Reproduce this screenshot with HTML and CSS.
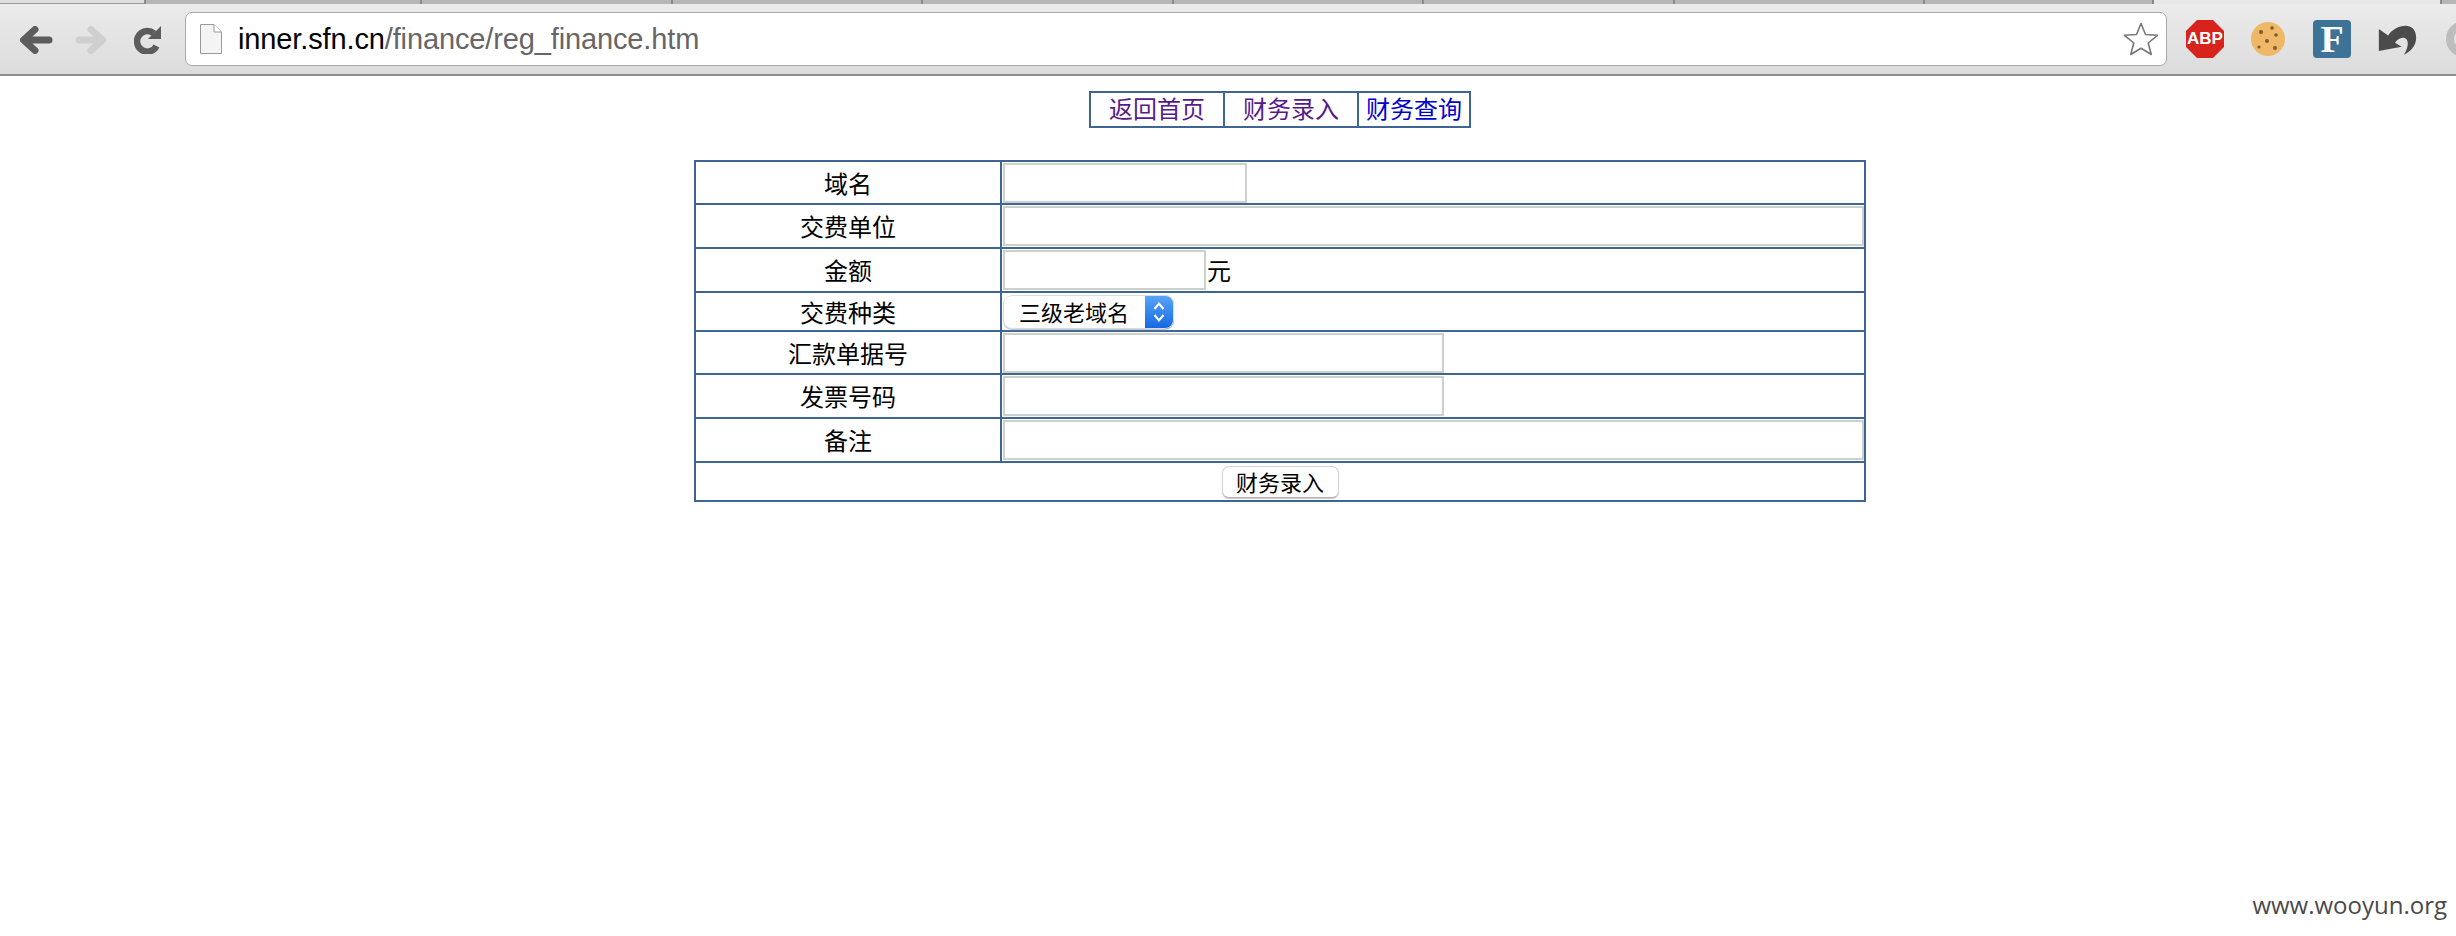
FILE: index.html
```html
<!DOCTYPE html>
<html lang="zh-CN">
<head>
<meta charset="utf-8">
<title>财务录入</title>
<link rel="stylesheet" href="styles.css">
</head>
<body>
<div class="chrome">
  <div class="tabstrip">
    <span class="tab tab-first"></span>
    <span class="tab tab-w1"></span>
    <span class="tab"></span>
    <span class="tab"></span>
    <span class="tab"></span>
    <span class="tab"></span>
    <span class="tab"></span>
    <span class="tab"></span>
    <span class="tab tab-w2"></span>
    <span class="tab-gap"></span>
    <span class="tab tab-last"></span>
  </div>
  <div class="toolbar">
    <svg class="ic-back" viewBox="19 26 34 28" aria-hidden="true"><path d="M24 40H49M35 29.500L23.500 40L35 50.500" fill="none" stroke="#5c5c5c" stroke-width="7" stroke-linecap="round" stroke-linejoin="round"/></svg>
    <svg class="ic-fwd" viewBox="75 26 34 28" aria-hidden="true"><path d="M79 40H102M91 29.500L102.500 40L91 50.500" fill="none" stroke="#cfcfcf" stroke-width="7" stroke-linecap="round" stroke-linejoin="round"/></svg>
    <svg class="ic-reload" viewBox="134 26 28 28" aria-hidden="true"><path d="M154 33.500A10.300 10.300 0 1 0 156.500 46" fill="none" stroke="#5c5c5c" stroke-width="6.500"/><path d="M161 26V39H148Z" fill="#5c5c5c"/></svg>
    <div class="omnibox">
      <svg class="ic-doc" viewBox="0 0 22 30" aria-hidden="true"><path d="M.5.500H14L21.500 8V29.500H.5Z" fill="#f4f4f4" stroke="#9a9a9a"/><path d="M14 .5V8H21.500" fill="#fff" stroke="#9a9a9a"/></svg>
      <div class="url"><span class="url-host">inner.sfn.cn</span>/finance/reg_finance.htm</div>
      <svg class="ic-star" viewBox="0 0 36 34" aria-hidden="true"><path d="M18 1.500L22.500 12.500L34.500 13.300L25.200 21L28.300 32.500L18 26.200L7.700 32.500L10.800 21L1.500 13.300L13.500 12.500Z" fill="#fff" stroke="#777" stroke-width="1.600" stroke-linejoin="round"/></svg>
    </div>
    <div class="ext ext-abp"><span>ABP</span></div>
    <svg class="ext ext-cookie" viewBox="0 0 36 36" aria-hidden="true">
      <circle cx="18" cy="18" r="17" fill="#efb866"/>
      <g fill="#7c5a35"><circle cx="11" cy="11" r="2"/><circle cx="22" cy="7" r="1.800"/><circle cx="26" cy="14" r="1.800"/><circle cx="17" cy="20" r="2"/><circle cx="9" cy="26" r="1.600"/><circle cx="25" cy="27" r="2"/></g>
    </svg>
    <div class="ext ext-f"><span>F</span></div>
    <svg class="ext ext-undo" viewBox="265 40 117 97" aria-hidden="true"><path d="M267 58L295 78C315 45 380 30 380 85C380 110 362 128 343 136C360 110 358 85 340 85C330 85 322 92 316 100L336 112L267 125Z" fill="#4b4b4b"/></svg>
    <div class="ext ext-ring"></div>
  </div>
</div>

<div class="page">
  <table class="nav">
    <tr>
      <td class="nav-a"><a class="visited" href="#">返回首页</a></td>
      <td class="nav-b"><a class="visited" href="#">财务录入</a></td>
      <td class="nav-c"><a class="fresh" href="#">财务查询</a></td>
    </tr>
  </table>

  <form class="form">
    <table class="grid">
      <tr class="tight">
        <td class="label">域名</td>
        <td class="value"><input class="in in-domain" type="text"></td>
      </tr>
      <tr>
        <td class="label">交费单位</td>
        <td class="value"><input class="in in-full" type="text"></td>
      </tr>
      <tr>
        <td class="label">金额</td>
        <td class="value"><div class="amount"><input class="in in-amount" type="text"><span class="unit">元</span></div></td>
      </tr>
      <tr class="short">
        <td class="label">交费种类</td>
        <td class="value">
          <div class="select-wrap">
            <select class="select"><option>三级老域名</option></select>
            <svg class="select-arrows" viewBox="0 0 14 24" aria-hidden="true"><path d="M2.500 9L7 3.500L11.500 9M2.500 15L7 20.500L11.500 15" fill="none" stroke="#fff" stroke-width="2"/></svg>
          </div>
        </td>
      </tr>
      <tr class="tight">
        <td class="label">汇款单据号</td>
        <td class="value"><input class="in in-mid" type="text"></td>
      </tr>
      <tr>
        <td class="label">发票号码</td>
        <td class="value"><input class="in in-mid" type="text"></td>
      </tr>
      <tr>
        <td class="label">备注</td>
        <td class="value"><input class="in in-full" type="text"></td>
      </tr>
      <tr class="short">
        <td class="submit-cell" colspan="2"><button class="submit" type="button">财务录入</button></td>
      </tr>
    </table>
  </form>
</div>

<div class="mark">www.wooyun.org</div>
</body>
</html>
```

FILE: styles.css
```css
html, body {
  margin: 0;
  padding: 0;
  height: 936px;
  overflow: hidden;
  background: #fff;
}
body {
  position: relative;
  font-family: "Noto Sans CJK SC", "Liberation Sans", sans-serif;
  font-size: 24px;
  color: #000;
}

/* browser chrome */
.chrome {
  width: 2456px;
  overflow: hidden;
  background: linear-gradient(#ececec, #dcdcdc);
  border-bottom: 2px solid #8e8e8e;
}
.tabstrip {
  display: flex;
  height: 4px;
  background: #e8e8e8;
}
.tab {
  flex: none;
  width: 250.500px;
  box-sizing: border-box;
  background: #b6b6b6;
  border-left: 2px solid #8a8a8a;
}
.tab-first {
  width: 144px;
  background: #dedede;
  border-left: 0;
  border-bottom: 1px solid #999;
}
.tab-w1 { width: 276px; }
.tab-w2 { width: 231px; border-right: 2px solid #8a8a8a; }
.tab-gap { flex: none; width: 286px; }
.tab-last { width: 20px; }
.toolbar {
  display: flex;
  align-items: center;
  height: 70px;
  box-sizing: border-box;
  padding: 0 0 0 19px;
}
.toolbar svg { flex: none; display: block; }
.ic-back { width: 34px; height: 28px; margin-top: 1px; }
.ic-fwd { width: 34px; height: 28px; margin: 1px 0 0 22px; }
.ic-reload { width: 28px; height: 28px; margin: 1px 0 0 25px; }
.omnibox {
  flex: none;
  display: flex;
  align-items: center;
  width: 1982px;
  height: 54px;
  box-sizing: border-box;
  margin-left: 23px;
  padding: 0 7px 0 14px;
  background: #fff;
  border: 1px solid #a9a9a9;
  border-radius: 7px;
}
.ic-doc { width: 22px; height: 30px; }
.url {
  flex: 1;
  margin-left: 16px;
  font-family: "Liberation Sans", Arial, sans-serif;
  font-size: 29px;
  letter-spacing: -0.13px;
  color: #666;
  white-space: nowrap;
}
.url-host { color: #000; }
.ic-star { width: 36px; height: 34px; }
.ext { flex: none; }
.ext-abp {
  display: flex;
  align-items: center;
  justify-content: center;
  width: 38px;
  height: 38px;
  margin-left: 19px;
  background: #d6231c;
  clip-path: polygon(29% 0, 71% 0, 100% 29%, 100% 71%, 71% 100%, 29% 100%, 0 71%, 0 29%);
  font-family: "Liberation Sans", Arial, sans-serif;
  font-size: 17px;
  font-weight: 700;
  color: #fff;
}
.ext-cookie { width: 36px; height: 36px; margin-left: 26px; }
.ext-f {
  display: flex;
  align-items: center;
  justify-content: center;
  width: 38px;
  height: 38px;
  margin-left: 27px;
  background: #3d7397;
  border-radius: 4px;
  font-family: "Liberation Serif", serif;
  font-size: 38px;
  font-weight: 700;
  line-height: 1;
  color: #fff;
}
.ext-undo { width: 39px; height: 32px; margin-left: 27px; }
.ext-ring {
  width: 36px;
  height: 36px;
  margin-left: 29px;
  box-sizing: border-box;
  border: 8px solid #bdbdbd;
  border-radius: 50%;
}

/* page: the layout viewport is wider than the crop */
.page {
  width: 2560px;
  padding-top: 15px;
}
table {
  border-collapse: collapse;
  margin: 0 auto;
}
td {
  box-sizing: border-box;
  padding: 0;
  border: 2px solid #3f6592;
  text-align: center;
}
.nav {
  table-layout: fixed;
  width: 380px;
  height: 37px;
}
.nav td { line-height: 30px; padding-bottom: 3px; }
.nav-a { width: 134px; }
.nav-b { width: 134px; }
.nav-c { width: 112px; }
.nav a { text-decoration: none; }
.nav .visited { color: #551a8b; }
.nav .fresh { color: #0000d0; }

.form { margin: 32px 0 0; }
.grid {
  table-layout: fixed;
  width: 1172px;
}
.grid tr { height: 44px; }
.grid tr.tight { height: 43px; }
.grid tr.short { height: 39px; }
.label { width: 306px; line-height: 30px; }
.value { text-align: left; padding-left: 1px; }
.in {
  display: block;
  height: 40px;
  box-sizing: border-box;
  margin: 0;
  padding: 0 4px;
  background: #fff;
  border: 2px solid #ccd1ce;
  border-radius: 0;
  outline: 0;
}
.in-domain { width: 244px; }
.in-full { width: 861px; }
.in-amount { width: 203px; }
.in-mid { width: 441px; }
.amount { display: flex; align-items: center; }
.unit { margin-left: 1px; line-height: 30px; }
.select-wrap {
  position: relative;
  width: 171px;
  height: 34px;
}
.select {
  appearance: none;
  -webkit-appearance: none;
  display: block;
  width: 171px;
  height: 34px;
  box-sizing: border-box;
  margin: 0;
  padding: 0 0 2px 16px;
  font-family: "Noto Sans CJK SC", sans-serif;
  font-size: 22px;
  color: #000;
  background-color: #fff;
  background-image: linear-gradient(#5aa6f7, #1468e0);
  background-repeat: no-repeat;
  background-position: right top;
  background-size: 29px 100%;
  border: 0;
  border-radius: 9px;
  box-shadow: inset 0 0 0 1px #d8dde3, 0 1px 1px #b8c4d4;
  outline: 0;
}
.select-arrows {
  position: absolute;
  top: 5px;
  right: 8px;
  width: 14px;
  height: 24px;
}
.submit {
  display: block;
  width: 117px;
  height: 32px;
  margin: 0 auto;
  padding: 0 0 2px;
  font-family: "Noto Sans CJK SC", sans-serif;
  font-size: 22px;
  line-height: 28px;
  color: #000;
  background: #fff;
  border: 1px solid #d2d2d2;
  border-bottom-color: #b4b4b4;
  border-radius: 7px;
  box-shadow: 0 1px 1px #c8c8c8;
}

.mark {
  position: absolute;
  right: 9px;
  top: 888px;
  font-family: "Open Sans", sans-serif;
  font-size: 24px;
  line-height: 34px;
  color: #4a4a4a;
}
```
